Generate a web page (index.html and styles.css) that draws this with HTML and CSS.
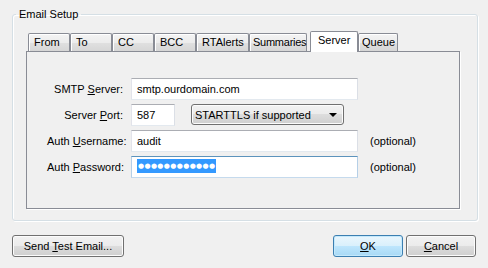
FILE: index.html
```html
<!DOCTYPE html>
<html>
<head>
<meta charset="utf-8">
<link rel="stylesheet" href="styles.css">
</head>
<body>
<div class="dialog">
  <fieldset class="group">
    <legend>Email Setup</legend>
    <div class="tabctl">
      <div class="tabs">
        <div class="tab t-from">From</div>
        <div class="tab t-to">To</div>
        <div class="tab t-cc">CC</div>
        <div class="tab t-bcc">BCC</div>
        <div class="tab t-rt">RTAlerts</div>
        <div class="tab t-sum">Summaries</div>
        <div class="tab t-server active">Server</div>
        <div class="tab t-queue">Queue</div>
      </div>
      <div class="panel">
        <div class="form">
          <div class="lbl">SMTP <u>S</u>erver:</div>
          <div class="field">smtp.ourdomain.com</div>
          <div></div>

          <div class="lbl">Server <u>P</u>ort:</div>
          <div class="port-row">
            <div class="field port">587</div>
            <div class="select"><span>STARTTLS if supported</span><span class="arrow"></span></div>
          </div>
          <div></div>

          <div class="lbl">Auth <u>U</u>sername:</div>
          <div class="field">audit</div>
          <div class="opt">(optional)</div>

          <div class="lbl">Auth <u>P</u>assword:</div>
          <div class="field focus"><span class="sel">●●●●●●●●●●●●</span></div>
          <div class="opt">(optional)</div>
        </div>
      </div>
    </div>
  </fieldset>
  <div class="footer">
    <button class="btn test">Send <u>T</u>est Email...</button>
    <div class="actions">
      <button class="btn ok"><u>O</u>K</button>
      <button class="btn cancel"><u>C</u>ancel</button>
    </div>
  </div>
</div>
</body>
</html>
```

FILE: styles.css
```css
* { box-sizing: border-box; }
html, body { margin: 0; background: #f0f0f0; }
body {
  font-family: "Liberation Sans", Arial, sans-serif;
  font-size: 11px;
  color: #000;
  width: 488px;
  height: 268px;
  overflow: hidden;
}
u { text-underline-offset: 1px; }

.dialog { padding: 7px 10px 0 12px; }

.group {
  margin: 0;
  min-width: 0;
  padding: 0 17px 11px 13px;
  border: 1px solid #d5dfe5;
  border-radius: 3px;
  box-shadow: inset 1px 1px 0 #fff, 1px 1px 0 #fff;
}
.group legend {
  padding: 0 3px;
  margin-left: -10px;
  line-height: 14px;
}

.tabctl { padding-top: 10px; }
.tabs {
  display: flex;
  align-items: flex-end;
  padding-left: 2px;
  position: relative;
  z-index: 1;
}
.tab {
  height: 18px;
  border: 1px solid #898c95;
  border-bottom: 0;
  border-radius: 2px 2px 0 0;
  background: linear-gradient(#f4f4f4, #ececec 50%, #e0e0e0 51%, #d6d6d6);
  box-shadow: inset 1px 1px 0 #fff;
  padding-left: 5px;
  line-height: 15px;
  padding-top: 1px;
  white-space: nowrap;
}
.t-from, .t-to, .t-cc, .t-bcc { width: 42px; }
.t-rt { width: 53px; }
.t-sum { width: 58px; padding-left: 3px; letter-spacing: -0.25px; }
.t-server { width: 48px; }
.t-queue { width: 40px; padding-left: 3px; }
.tab.active {
  height: 21px;
  margin-bottom: -1px;
  margin-left: 3px;
  background: #fff;
  box-shadow: none;
  padding-left: 7px;
}

.panel {
  border: 1px solid #898c95;
  background: #f0f0f0;
  box-shadow: 1px 1px 0 #fff;
  padding: 26px 0 30px 20px;
}

.form {
  display: grid;
  grid-template-columns: 76px 227px auto;
  grid-auto-rows: 22px;
  column-gap: 8px;
  row-gap: 4px;
  align-items: center;
}
.lbl { text-align: right; white-space: nowrap; }
.opt { margin-left: 4px; }

.field {
  height: 22px;
  border: 1px solid;
  border-color: #abadb3 #dbdfe6 #e3e9ef #e2e3ea;
  background: #fff;
  padding-left: 5px;
  line-height: 20px;
  white-space: nowrap;
}
.field.focus { border-color: #5c93bc #b5cfe7 #c5daed #b5cfe7; }
.sel {
  display: inline-block;
  background: #3399ff;
  color: #fff;
  font-family: "DejaVu Sans", sans-serif;
  font-size: 7px;
  letter-spacing: 0.35px;
  line-height: 14px;
  height: 14px;
  padding-left: 1px;
  vertical-align: top;
  margin-top: 2px;
}

.port-row { display: flex; gap: 16px; align-items: flex-start; height: 22px; }
.port { width: 44px; }
.select {
  width: 153px;
  height: 21px;
  border: 1px solid #707070;
  border-radius: 3px;
  background: linear-gradient(#f2f2f2, #ebebeb 50%, #dddddd 50%, #cfcfcf);
  box-shadow: inset 0 0 0 1px #fcfcfc;
  display: flex;
  align-items: center;
  justify-content: space-between;
  padding: 0 6px 0 3px;
}
.arrow {
  width: 0;
  height: 0;
  border-left: 4px solid transparent;
  border-right: 4px solid transparent;
  border-top: 4px solid #000;
  margin-top: 1px;
}

.footer {
  display: flex;
  justify-content: space-between;
  margin-top: 14px;
  padding-right: 2px;
}
.actions { display: flex; gap: 3px; }
.btn {
  height: 22px;
  font: inherit;
  color: #000;
  border: 1px solid #707070;
  border-radius: 3px;
  background: linear-gradient(#f2f2f2, #ebebeb 50%, #dddddd 50%, #cfcfcf);
  box-shadow: inset 0 0 0 1px #fcfcfc;
  padding: 0;
}
.test { width: 112px; }
.ok, .cancel { width: 70px; }
.ok {
  border-color: #3c7fb1;
  background: linear-gradient(#eaf6fd, #d9f0fc 50%, #bee6fd 50%, #a7d9f5);
  box-shadow: inset 0 0 0 1px #c4e9fc;
}
```
